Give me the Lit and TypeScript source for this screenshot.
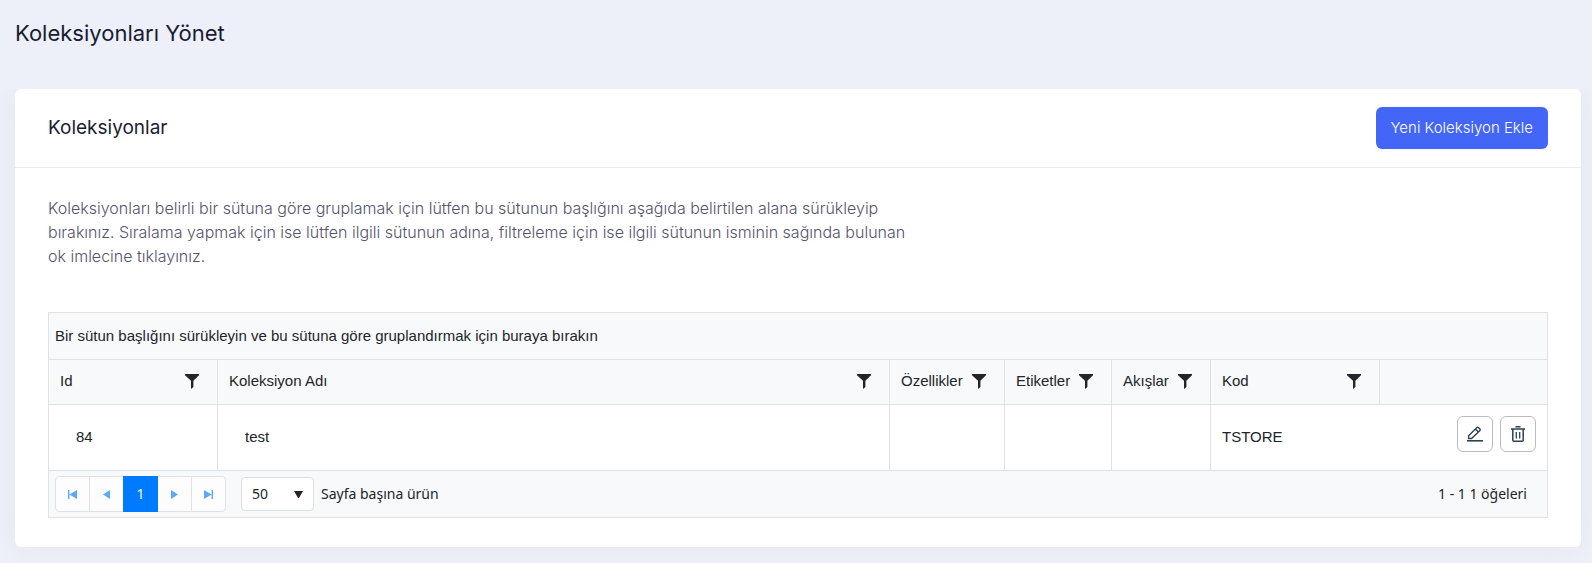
import { LitElement, html, svg, css, nothing } from "lit";
import { customElement, property, state } from "lit/decorators.js";
import { classMap } from "lit/directives/class-map.js";

interface Column {
  key: string;
  title: string;
  size: string;
  filter: boolean;
}

interface Collection {
  id: number;
  name: string;
  code: string;
}

const COLUMNS: Column[] = [
  { key: "id", title: "Id", size: "col-wide", filter: true },
  { key: "name", title: "Koleksiyon Adı", size: "col-auto", filter: true },
  { key: "props", title: "Özellikler", size: "col-props", filter: true },
  { key: "tags", title: "Etiketler", size: "col-tags", filter: true },
  { key: "flows", title: "Akışlar", size: "col-flows", filter: true },
  { key: "code", title: "Kod", size: "col-wide", filter: true },
  { key: "actions", title: "", size: "col-actions", filter: false },
];

const funnel = html`<svg width="14" height="15" viewBox="0 0 14 15" aria-hidden="true">
  <path d="M0 0h14v1.2L8.4 6.8V13L6 15V6.8L0 1.2z" fill="#212529" />
</svg>`;

const pencil = html`<svg width="16" height="16" viewBox="0 0 16 16" fill="none" stroke="#2b4450" aria-hidden="true">
  <path d="M0 14.8h16" stroke-width="1.6" />
  <path d="M1.6 12.5V9.8L9.7 1.7q1-1 2 0l1 1q1 1 0 2L4.6 12.5zM8.4 3l3 3" stroke-width="1.4" />
</svg>`;

const trash = html`<svg width="14" height="16" viewBox="0 0 14 16" fill="none" stroke="#2b4450" aria-hidden="true">
  <path d="M0 3h14M4.5.7h5" stroke-width="1.5" />
  <path d="M1.8 3v11.2q0 1 1 1h8.4q1 0 1-1V3" stroke-width="1.5" />
  <path d="M5.3 6v6.5M8.7 6v6.5" stroke-width="1.3" />
</svg>`;

const glyphs = {
  first: svg`<path d="M0 0h1.4v9H0zM9 0v9L1.4 4.5z" />`,
  prev: svg`<path d="M8 0v9L1 4.5z" />`,
  next: svg`<path d="M1 0v9L8 4.5z" />`,
  last: svg`<path d="M0 0v9L7.6 4.5zM7.6 0H9v9H7.6z" />`,
};

@customElement("data-pager")
export class DataPager extends LitElement {
  @property({ type: Number }) total = 0;
  @state() private size = 50;

  static styles = css`
    :host {
      display: flex;
      align-items: center;
      padding: 5px 20px 5px 6px;
      background: #f8f9fb;
      color: #212529;
      font: 14px/20px "Noto Sans", sans-serif;
    }
    .pages {
      display: flex;
      height: 36px;
    }
    .page {
      display: flex;
      align-items: center;
      justify-content: center;
      box-sizing: border-box;
      width: 35px;
      margin: 0 -1px 0 0;
      padding: 0;
      border: 1px solid #dee2e6;
      background: #fdfdfe;
      color: #5ea8fa;
      font: inherit;
    }
    .page:first-child {
      border-radius: 4px 0 0 4px;
    }
    .page:last-child {
      border-radius: 0 4px 4px 0;
    }
    .current {
      position: relative;
      border-color: #007bff;
      background: #007bff;
      color: #fff;
    }
    .glyph {
      fill: currentColor;
    }
    .sizes {
      display: flex;
      align-items: center;
      flex: 1;
      gap: 7px;
      margin-left: 16px;
    }
    .select {
      display: grid;
      align-items: center;
    }
    .select > * {
      grid-area: 1 / 1;
    }
    select {
      box-sizing: border-box;
      width: 73px;
      height: 34px;
      padding: 0 10px;
      border: 1px solid #dcdfe3;
      border-radius: 4px;
      appearance: none;
      background: #fff;
      color: inherit;
      font: inherit;
    }
    .arrow {
      justify-self: end;
      margin-right: 11px;
      pointer-events: none;
    }
  `;

  private step(label: string, shape: unknown) {
    return html`<button class="page" type="button" aria-label=${label}>
      <svg class="glyph" width="9" height="9" viewBox="0 0 9 9" aria-hidden="true">${shape}</svg>
    </button>`;
  }

  render() {
    return html`
      <nav class="pages" aria-label="Sayfalar">
        ${this.step("İlk sayfa", glyphs.first)} ${this.step("Önceki sayfa", glyphs.prev)}
        <button class="page current" type="button" aria-current="page">1</button>
        ${this.step("Sonraki sayfa", glyphs.next)} ${this.step("Son sayfa", glyphs.last)}
      </nav>
      <div class="sizes">
        <div class="select">
          <select
            id="size"
            @change=${(e: Event) => (this.size = Number((e.target as HTMLSelectElement).value))}
          >
            ${[10, 20, 50].map((n) => html`<option value=${n} ?selected=${n === this.size}>${n}</option>`)}
          </select>
          <svg class="arrow" width="9" height="8" viewBox="0 0 9 8" aria-hidden="true">
            <path d="M0 1h9L5 8H4z" fill="#212529" />
          </svg>
        </div>
        <label for="size">Sayfa başına ürün</label>
      </div>
      <span>1 - ${this.total} ${this.total} öğeleri</span>
    `;
  }
}

@customElement("collection-grid")
export class CollectionGrid extends LitElement {
  @property({ attribute: false }) rows: Collection[] = [];

  static styles = css`
    :host {
      display: block;
      border: 1px solid #dee2e6;
      color: #212529;
      font: 15px/20px "Liberation Sans", Arial, sans-serif;
    }
    .group {
      padding: 13px 6px;
      border-bottom: 1px solid #dee2e6;
      background: #f8f9fb;
    }
    table {
      width: 100%;
      table-layout: fixed;
      border-collapse: separate;
      border-spacing: 0;
    }
    .col-wide {
      width: 169px;
    }
    .col-props {
      width: 115px;
    }
    .col-tags {
      width: 107px;
    }
    .col-flows {
      width: 99px;
    }
    .col-actions {
      width: 167px;
    }
    th,
    td {
      box-sizing: border-box;
      padding: 0 11px 2px;
      border-bottom: 1px solid #dee2e6;
      font-weight: 400;
      text-align: left;
      white-space: nowrap;
    }
    th {
      height: 45px;
      background: #f8f9fb;
    }
    td {
      height: 66px;
    }
    .ruled {
      border-right: 1px solid #dee2e6;
    }
    .head {
      display: flex;
      align-items: center;
      justify-content: space-between;
    }
    .filter {
      display: flex;
      margin: 0;
      padding: 7px;
      border: 0;
      background: none;
    }
    .indent {
      padding-left: 27px;
    }
    .actions {
      display: flex;
      justify-content: flex-end;
      gap: 7px;
      padding-bottom: 6px;
    }
    .action {
      display: flex;
      align-items: center;
      justify-content: center;
      box-sizing: border-box;
      width: 36px;
      height: 36px;
      padding: 0;
      border: 1px solid #b9bcc1;
      border-radius: 6px;
      background: #fff;
    }
  `;

  render() {
    return html`
      <div class="group">Bir sütun başlığını sürükleyin ve bu sütuna göre gruplandırmak için buraya bırakın</div>
      <table>
        <thead>
          <tr>
            ${COLUMNS.map(
              (c) => html`<th scope="col" class=${classMap({ [c.size]: true, ruled: c.filter })}>
                <div class="head">
                  <span>${c.title}</span>
                  ${c.filter
                    ? html`<button class="filter" type="button" aria-label="${c.title} filtrele">${funnel}</button>`
                    : nothing}
                </div>
              </th>`
            )}
          </tr>
        </thead>
        <tbody>
          ${this.rows.map(
            (r) => html`<tr>
              <td class="ruled indent">${r.id}</td>
              <td class="ruled indent">${r.name}</td>
              <td class="ruled"></td>
              <td class="ruled"></td>
              <td class="ruled"></td>
              <td>${r.code}</td>
              <td>
                <div class="actions">
                  <button class="action" type="button" aria-label="Düzenle">${pencil}</button>
                  <button class="action" type="button" aria-label="Sil">${trash}</button>
                </div>
              </td>
            </tr>`
          )}
        </tbody>
      </table>
      <data-pager .total=${this.rows.length}></data-pager>
    `;
  }
}

@customElement("app-root")
export class AppRoot extends LitElement {
  private rows: Collection[] = [{ id: 84, name: "test", code: "TSTORE" }];

  static styles = css`
    :host {
      display: flow-root;
      box-sizing: border-box;
      min-height: 100vh;
      padding: 16px 11px 16px 15px;
      background: #edf0f8;
      color: #181c32;
      font-family: Inter, sans-serif;
    }
    h1,
    h2,
    p {
      margin: 0;
      font-weight: 400;
    }
    h1 {
      margin-bottom: 39px;
      font-size: 22px;
      line-height: 34px;
    }
    .card {
      border-radius: 6px;
      background: #fff;
      box-shadow: 0 0 30px rgba(82, 63, 105, 0.05);
      clip-path: inset(0 -30px -30px);
    }
    .bar {
      display: flex;
      align-items: center;
      justify-content: space-between;
      padding: 18px 33px;
      border-bottom: 1px solid #e9ebf0;
    }
    h2 {
      font-size: 19px;
      line-height: 42px;
    }
    .add {
      height: 42px;
      padding: 0 15px;
      border: 0;
      border-radius: 6px;
      background: #4466f6;
      color: #fff;
      font: 300 15px/22px Inter, sans-serif;
    }
    .body {
      padding: 28px 33px 29px;
    }
    .hint {
      max-width: 870px;
      margin-bottom: 44px;
      color: #55526c;
      font-size: 16px;
      font-weight: 300;
      line-height: 24px;
    }
  `;

  render() {
    return html`
      <h1>Koleksiyonları Yönet</h1>
      <section class="card">
        <header class="bar">
          <h2>Koleksiyonlar</h2>
          <button class="add" type="button">Yeni Koleksiyon Ekle</button>
        </header>
        <div class="body">
          <p class="hint">
            Koleksiyonları belirli bir sütuna göre gruplamak için lütfen bu sütunun başlığını aşağıda belirtilen alana
            sürükleyip bırakınız. Sıralama yapmak için ise lütfen ilgili sütunun adına, filtreleme için ise ilgili
            sütunun isminin sağında bulunan ok imlecine tıklayınız.
          </p>
          <collection-grid .rows=${this.rows}></collection-grid>
        </div>
      </section>
    `;
  }
}
